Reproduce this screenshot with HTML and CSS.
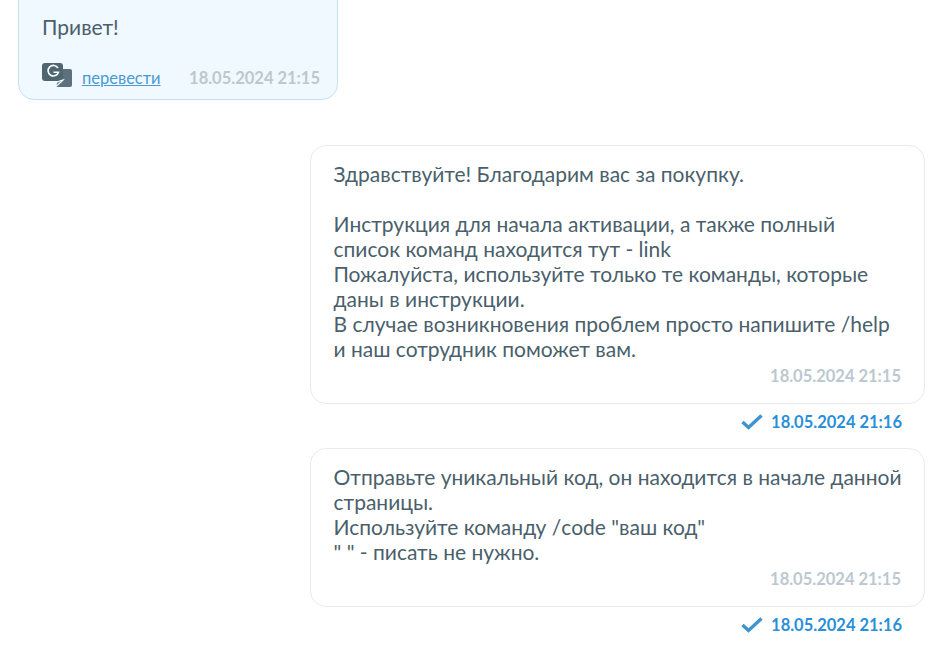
FILE: index.html
```html
<!DOCTYPE html>
<html lang="ru">
<head>
<meta charset="utf-8">
<title>Чат</title>
<link rel="stylesheet" href="styles.css">
</head>
<body>
<div class="chat">
  <div class="msg msg-in">
    <div class="bubble bubble-in">
      <div class="text">Привет!</div>
      <div class="in-foot">
        <svg class="g-icon" width="30" height="25" viewBox="0 0 30 25">
          <path fill="#5c717d" d="M14 6h14a2 2 0 0 1 2 2v14a2 2 0 0 1-2 2H14l-.5-1 5-5z"/>
          <path fill="#4f6570" d="M3 0h15a3 3 0 0 1 3 3v12a3 3 0 0 1-3 3H3a3 3 0 0 1-3-3V3a3 3 0 0 1 3-3z"/>
          <path fill="#5c717d" stroke="#f0f9ff" stroke-width="1.2" d="M21 17l-1 1-6.500 6 1-4.500 3-1.500z"/>
          <path fill="none" stroke="#fff" stroke-width="1.6" d="M16 5A5.300 5.300 0 1 0 16.500 9.200H11.500"/>
        </svg>
        <a class="translate" href="#">перевести</a>
        <span class="time time-in">18.05.2024 21:15</span>
      </div>
    </div>
  </div>
  <div class="msg msg-out">
    <div class="bubble bubble-out">
      <div class="text">Здравствуйте! Благодарим вас за покупку.<br><br>Инструкция для начала активации, а также полный список команд находится тут - link<br>Пожалуйста, используйте только те команды, которые даны в инструкции.<br>В случае возникновения проблем просто напишите /help и наш сотрудник поможет вам.</div>
      <div class="time time-bubble">18.05.2024 21:15</div>
    </div>
    <div class="status">
      <svg class="check" width="22" height="16" viewBox="0 0 22 16"><path fill="none" stroke="#3d95d0" stroke-width="3.400" d="M1.500 8l6 5.500L20.500 1.500"/></svg>
      <span class="time time-read">18.05.2024 21:16</span>
    </div>
  </div>
  <div class="msg msg-out">
    <div class="bubble bubble-out">
      <div class="text">Отправьте уникальный код, он находится в начале данной страницы.<br>Используйте команду /code "ваш код"<br>" " - писать не нужно.</div>
      <div class="time time-bubble">18.05.2024 21:15</div>
    </div>
    <div class="status">
      <svg class="check" width="22" height="16" viewBox="0 0 22 16"><path fill="none" stroke="#3d95d0" stroke-width="3.400" d="M1.500 8l6 5.500L20.500 1.500"/></svg>
      <span class="time time-read">18.05.2024 21:16</span>
    </div>
  </div>
</div>
</body>
</html>
```

FILE: styles.css
```css
html, body {
  margin: 0;
  padding: 0;
  height: 100%;
  overflow: hidden;
  background: #fff;
}
body {
  font-family: Lato, "Noto Sans", sans-serif;
  color: #4a5f6b;
}
.chat {
  display: flex;
  flex-direction: column;
  margin-top: -60px;
  margin-left: 18px;
  width: 907px;
}
.msg {
  display: flex;
  flex-direction: column;
}
.msg-in {
  align-items: flex-start;
  margin-bottom: 45px;
}
.msg-out {
  align-items: flex-end;
  margin-bottom: 17px;
}
.bubble {
  box-sizing: border-box;
  border-radius: 16px;
}
.bubble-in {
  width: 320px;
  height: 160px;
  padding: 73px 17px 0 23px;
  background: #f0f9ff;
  border: 1px solid #c6e1f1;
}
.bubble-out {
  width: 615px;
  padding: 15px 20px 17px 22.5px;
  background: #fff;
  border: 1px solid #e8ebed;
}
.text {
  font-size: 21px;
  line-height: 25px;
}
.in-foot {
  display: flex;
  align-items: center;
  margin-top: 29px;
}
.g-icon {
  flex: none;
  margin-top: -5px;
}
.translate {
  margin-left: 10px;
  font-size: 16.5px;
  line-height: 20px;
  color: #4a9ad4;
  text-decoration: underline;
}
.time {
  font-size: 16.5px;
  font-weight: 700;
  line-height: 20px;
  white-space: nowrap;
}
.time-in {
  margin-left: auto;
  color: #bcc8d0;
}
.time-bubble {
  margin-top: 5px;
  margin-right: 3px;
  text-align: right;
  color: #bcc8d0;
}
.status {
  display: flex;
  align-items: center;
  gap: 8px;
  margin-top: 7.500px;
  margin-bottom: -0.500px;
  padding-right: 23px;
}
.time-read {
  color: #2a8fd8;
}
```
